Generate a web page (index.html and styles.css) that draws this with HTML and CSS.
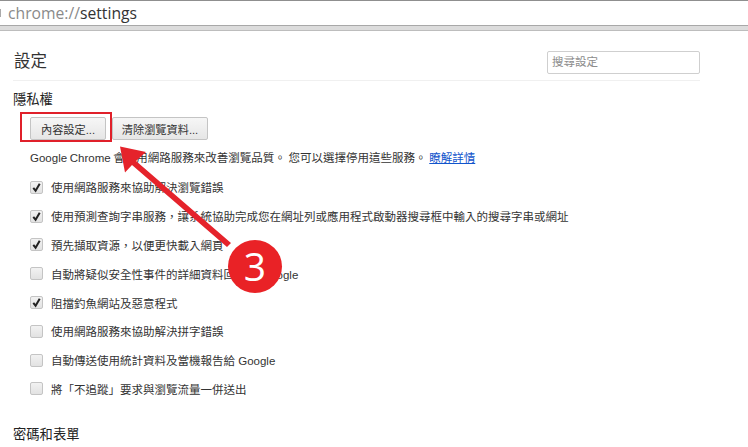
FILE: index.html
```html
<!DOCTYPE html>
<html lang="zh-Hant">
<head>
<meta charset="utf-8">
<title>設定</title>
<link rel="stylesheet" href="styles.css">
</head>
<body>
<div class="addressbar"><span class="caret"></span><span class="scheme">chrome://</span><span class="path">settings</span></div>
<div class="band"></div>
<main class="page">
  <header class="head">
    <h1 class="title">設定</h1>
    <div class="search">搜尋設定</div>
  </header>
  <h2 class="section">隱私權</h2>
  <div class="buttons">
    <button class="btn btn-first">內容設定...</button>
    <button class="btn btn-second">清除瀏覽資料...</button>
  </div>
  <p class="intro">Google Chrome 會使用網路服務來改善瀏覽品質。 您可以選擇停用這些服務。 <a class="link">瞭解詳情</a></p>
  <ul class="options">
    <li class="option"><span class="box"><svg viewBox="0 0 12 12" class="tick"><path d="M2.5 6.5 5 9.5 9.5 2"/></svg></span>使用網路服務來協助解決瀏覽錯誤</li>
    <li class="option"><span class="box"><svg viewBox="0 0 12 12" class="tick"><path d="M2.5 6.5 5 9.5 9.5 2"/></svg></span>使用預測查詢字串服務，讓系統協助完成您在網址列或應用程式啟動器搜尋框中輸入的搜尋字串或網址</li>
    <li class="option"><span class="box"><svg viewBox="0 0 12 12" class="tick"><path d="M2.5 6.5 5 9.5 9.5 2"/></svg></span>預先擷取資源，以便更快載入網頁</li>
    <li class="option"><span class="box"></span>自動將疑似安全性事件的詳細資料回報給 Google</li>
    <li class="option"><span class="box"><svg viewBox="0 0 12 12" class="tick"><path d="M2.5 6.5 5 9.5 9.5 2"/></svg></span>阻擋釣魚網站及惡意程式</li>
    <li class="option"><span class="box"></span>使用網路服務來協助解決拼字錯誤</li>
    <li class="option"><span class="box"></span>自動傳送使用統計資料及當機報告給 Google</li>
    <li class="option"><span class="box"></span>將「不追蹤」要求與瀏覽流量一併送出</li>
  </ul>
  <h2 class="section section-next">密碼和表單</h2>
</main>
<div class="redbox"></div>
<svg class="arrow" viewBox="0 0 748 447" width="748" height="447">
  <polygon points="120,146.5 146,152 136,161 231,243 227,247 132,165 125,172.5"/>
</svg>
<div class="badge">3</div>
</body>
</html>
```
FILE: styles.css
```css
* { box-sizing: border-box; }
html, body { margin: 0; padding: 0; }
body {
  width: 748px;
  height: 447px;
  overflow: hidden;
  background: #fff;
  color: #303030;
  font-family: "Liberation Sans", "Noto Sans CJK TC", sans-serif;
  position: relative;
}
.addressbar {
  height: 26px;
  border-top: 1px solid #8f8f8f;
  border-bottom: 1px solid #a8a8a8;
  display: flex;
  align-items: center;
  font-family: "Open Sans", sans-serif;
  font-size: 15.7px;
  padding-bottom: 1px;
}
.caret { width: 1px; height: 8px; background: #aaa; margin-right: 7px; }
.scheme { color: #8a8a8a; }
.path { color: #333; }
.band {
  height: 5px;
  background: #dcdcdc;
  border-bottom: 1px solid #bdbdbd;
}
.page { padding: 0 48px 0 13px; }
.head {
  height: 50px;
  border-bottom: 1px solid #f0f0f0;
  display: flex;
  justify-content: space-between;
  align-items: flex-start;
  padding-top: 20px;
}
.title {
  margin: 0;
  font-size: 16.5px;
  font-weight: 400;
  line-height: 20px;
  color: #333;
  padding-left: 1px;
}
.search {
  width: 153px;
  height: 23px;
  border: 1px solid #cfcfcf;
  border-radius: 2px;
  font-size: 11.5px;
  line-height: 20px;
  padding-left: 4px;
  color: #8c8c8c;
}
.section {
  margin: 10px 0 0;
  font-size: 13.3px;
  font-weight: 400;
  line-height: 17px;
  color: #222;
}
.buttons {
  display: flex;
  gap: 6px;
  margin: 9px 0 0 17px;
}
.btn {
  height: 23px;
  padding: 0;
  border: 1px solid #c4c4c4;
  border-radius: 2px;
  background: linear-gradient(#f6f6f6, #e6e6e6);
  font: inherit;
  font-size: 11.2px;
  color: #333;
}
.btn-first { width: 76px; }
.btn-second { width: 96px; }
.intro {
  margin: 10px 0 0 17px;
  font-size: 11.5px;
  line-height: 17px;
  color: #333;
  white-space: nowrap;
  word-spacing: -0.5px;
}
.link { color: #15c; text-decoration: underline; }
.options { list-style: none; margin: 6px 0 0; padding: 0 0 0 17px; }
.option {
  height: 28.8px;
  display: flex;
  align-items: center;
  font-size: 11.5px;
  color: #333;
  white-space: nowrap;
}
.box {
  width: 13px;
  height: 13px;
  margin-right: 8px;
  flex: none;
  border: 1px solid #c4c4c4;
  border-radius: 2px;
  background: linear-gradient(#f2f2f2, #e2e2e2);
  display: flex;
}
.tick { width: 11px; height: 11px; fill: none; stroke: #222; stroke-width: 2.2; }
.section-next { margin-top: 23px; }
.redbox {
  position: absolute;
  left: 20px;
  top: 112px;
  width: 92px;
  height: 30px;
  border: 2px solid #e0202a;
}
.arrow { position: absolute; left: 0; top: 0; }
.arrow polygon { fill: #e5232b; }
.badge {
  position: absolute;
  left: 228px;
  top: 240px;
  width: 54px;
  height: 53px;
  border-radius: 50%;
  background: #e92226;
  color: #fff;
  font-family: "Open Sans", sans-serif;
  font-size: 39px;
  line-height: 51px;
  text-align: center;
}
```
